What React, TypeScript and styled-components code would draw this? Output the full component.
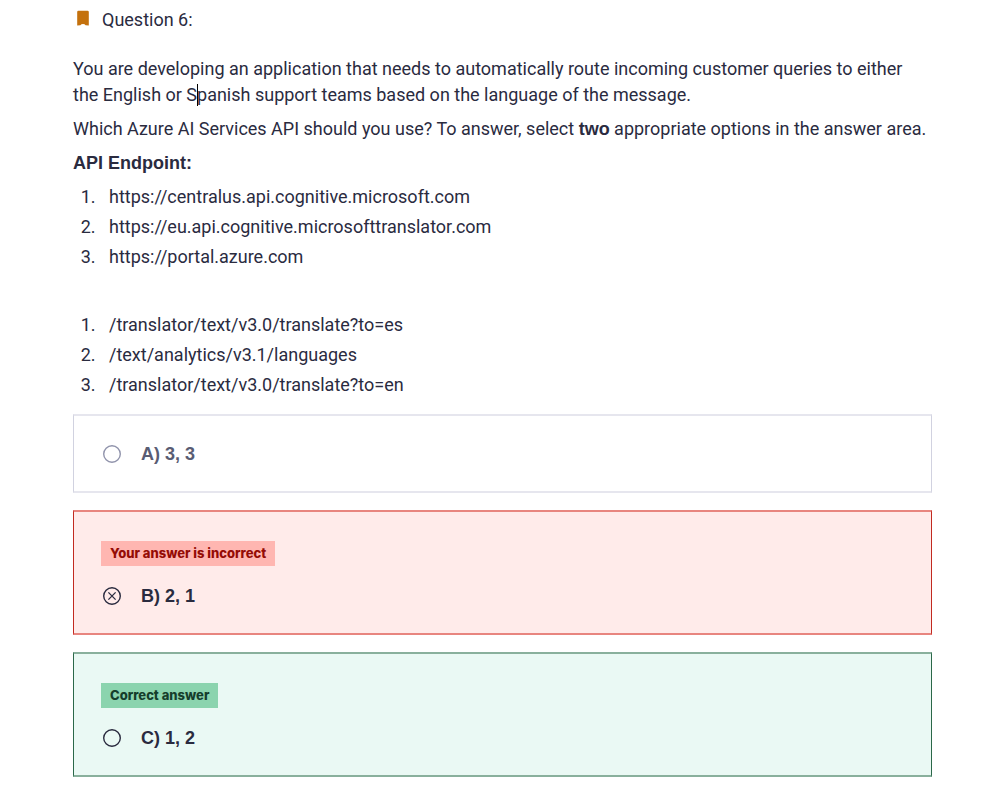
import React from "react";
import styled, { createGlobalStyle } from "styled-components";

const GlobalStyle = createGlobalStyle`
  *, *::before, *::after { box-sizing: border-box; }
  body {
    margin: 0;
    background: #ffffff;
    color: #2a2b3f;
    font-family: Roboto, "Liberation Sans", sans-serif;
    font-size: 18px;
    line-height: 26px;
  }
  b {
    font-family: "Liberation Sans", sans-serif;
  }
`;

const Page = styled.main`
  padding: 7px 72px 18px 73px;
`;

const Header = styled.h1`
  display: flex;
  align-items: center;
  gap: 13px;
  margin: 0 0 23px;
  padding-left: 4px;
  font-size: 18px;
  font-weight: 400;
`;

const BookmarkIcon = styled.svg`
  display: block;
  width: 12px;
  height: 16px;
  margin-bottom: 4px;
`;

const Prompt = styled.div`
  display: flex;
  flex-direction: column;
  gap: 8px;
  margin-bottom: 16px;
`;

const Paragraph = styled.p`
  min-height: 26px;
  margin: 0;
`;

const Caret = styled.span`
  position: relative;

  &::after {
    content: "";
    position: absolute;
    top: 0;
    left: 0;
    width: 1px;
    height: 22px;
    background: #000000;
  }
`;

const Choices = styled.ol`
  margin: 0;
  padding-left: 27px;
`;

const Choice = styled.li`
  padding-left: 9px;

  & + & {
    margin-top: 4px;
  }
`;

const Answers = styled.form`
  display: flex;
  flex-direction: column;
  gap: 17px;
`;

type Status = "neutral" | "incorrect" | "correct";

const palette = {
  neutral: { bg: "#ffffff", edge: "#d1d2e0", line: "#e6e6ee", text: "#595c73", ring: "#9194ac", badge: "#ffffff", badgeText: "#595c73" },
  incorrect: { bg: "#ffebea", edge: "#c12a20", line: "#e8857f", text: "#2a2b3f", ring: "#2a2b3f", badge: "#ffb6b1", badgeText: "#950c05" },
  correct: { bg: "#eaf9f4", edge: "#2b6849", line: "#89b09c", text: "#2a2b3f", ring: "#2a2b3f", badge: "#8bd4ae", badgeText: "#153e2b" },
};

const Card = styled.div<{ $status: Status }>`
  padding: 25px 27px 24px;
  border-style: solid;
  border-width: 2px 1px;
  border-color: ${(p) => palette[p.$status].line} ${(p) => palette[p.$status].edge};
  background: ${(p) => palette[p.$status].bg};
`;

const Badge = styled.strong<{ $status: Status }>`
  display: block;
  width: fit-content;
  margin: 4px 0 17px;
  padding: 0 9px 1px;
  background: ${(p) => palette[p.$status].badge};
  color: ${(p) => palette[p.$status].badgeText};
  font-family: Inter, "Liberation Sans", sans-serif;
  font-size: 13px;
  font-weight: 800;
  line-height: 24px;
`;

const AnswerLabel = styled.label<{ $status: Status }>`
  display: flex;
  align-items: center;
  gap: 19px;
  padding-left: 1px;
  color: ${(p) => palette[p.$status].text};
  font-family: "Liberation Sans", sans-serif;
  font-weight: 700;
`;

const RadioBox = styled.span<{ $status: Status }>`
  position: relative;
  display: block;
  width: 20px;
  height: 20px;
  color: ${(p) => palette[p.$status].ring};

  input {
    position: absolute;
    inset: 0;
    width: 20px;
    height: 20px;
    margin: 0;
    opacity: 0;
  }

  svg {
    display: block;
  }
`;

interface AnswerProps {
  id: string;
  text: string;
  status: Status;
  note?: string;
}

function Answer({ id, text, status, note }: AnswerProps) {
  return (
    <Card $status={status}>
      {note && <Badge $status={status}>{note}</Badge>}
      <AnswerLabel $status={status} htmlFor={id}>
        <RadioBox $status={status}>
          <input id={id} type="radio" name="answer" defaultChecked={status === "incorrect"} />
          <svg width="20" height="20" viewBox="0 0 20 20" fill="none" stroke="currentColor" aria-hidden="true">
            <circle cx="10" cy="10" r="8.3" strokeWidth="1.4" />
            {status === "incorrect" && <path d="M6.4 6.4l7.2 7.2M13.6 6.4l-7.2 7.2" strokeWidth="1.3" />}
          </svg>
        </RadioBox>
        {text}
      </AnswerLabel>
    </Card>
  );
}

export default function App() {
  return (
    <>
      <GlobalStyle />
      <Page>
        <Header>
          <BookmarkIcon viewBox="0 0 12 16" aria-hidden="true">
            <path d="M1.4 0.8h9.2a1.2 1.2 0 0 1 1.2 1.2V15.6L8.6 15.2Q7.8 14 6 14T3.4 15.2L0.2 15.6V2A1.2 1.2 0 0 1 1.4 0.8z" fill="#c4710d" />
          </BookmarkIcon>
          Question 6:
        </Header>
        <Prompt>
          <Paragraph>
            You are developing an application that needs to automatically route incoming customer queries to either the
            English or S<Caret />panish support teams based on the language of the message.
          </Paragraph>
          <Paragraph>
            Which Azure AI Services API should you use? To answer, select <b>two</b> appropriate options in the answer
            area.
          </Paragraph>
          <Paragraph>
            <b>API Endpoint:</b>
          </Paragraph>
          <Choices>
            <Choice>https://centralus.api.cognitive.microsoft.com</Choice>
            <Choice>https://eu.api.cognitive.microsofttranslator.com</Choice>
            <Choice>https://portal.azure.com</Choice>
          </Choices>
          <Paragraph />
          <Choices>
            <Choice>/translator/text/v3.0/translate?to=es</Choice>
            <Choice>/text/analytics/v3.1/languages</Choice>
            <Choice>/translator/text/v3.0/translate?to=en</Choice>
          </Choices>
        </Prompt>
        <Answers>
          <Answer id="answer-a" status="neutral" text="A) 3, 3" />
          <Answer id="answer-b" status="incorrect" text="B) 2, 1" note="Your answer is incorrect" />
          <Answer id="answer-c" status="correct" text="C) 1, 2" note="Correct answer" />
        </Answers>
      </Page>
    </>
  );
}
